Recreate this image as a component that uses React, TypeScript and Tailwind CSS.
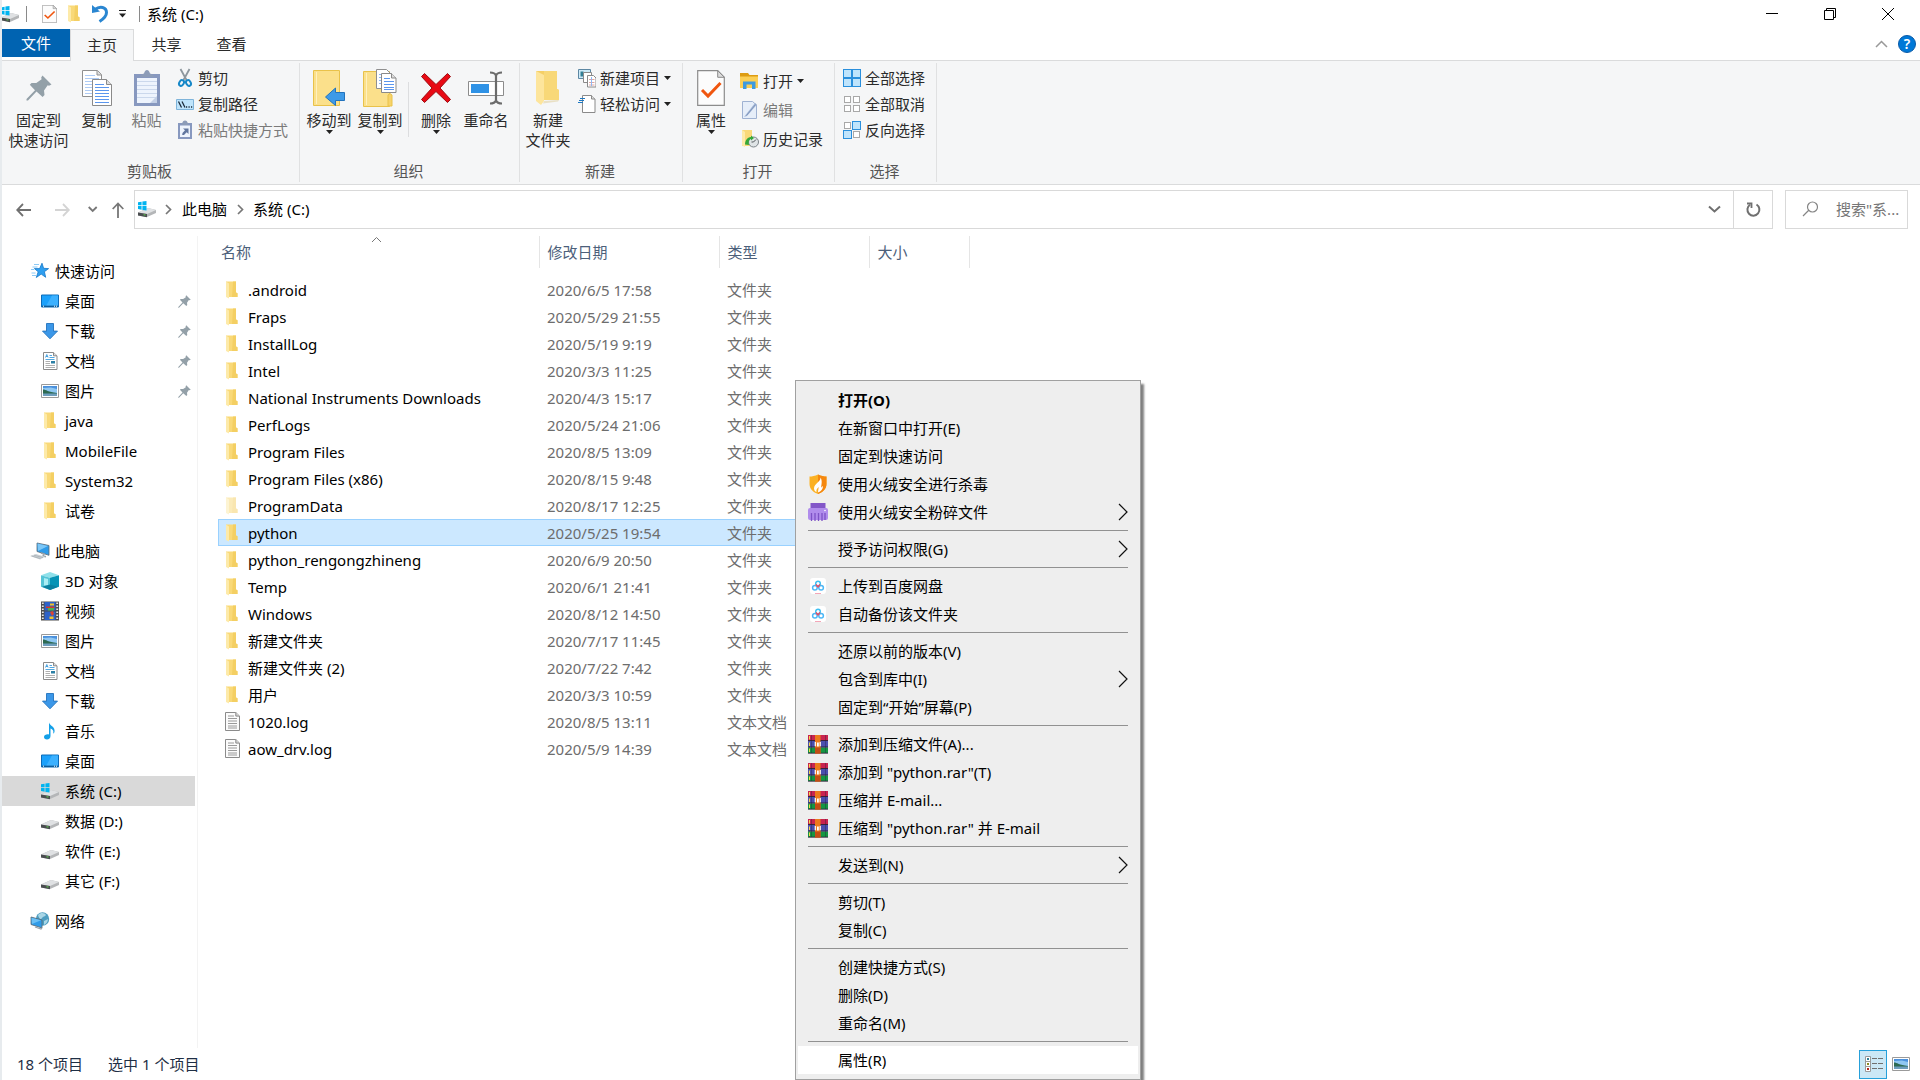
import type { ReactNode } from "react";

/* ---------- icons ---------- */

function DriveIcon({ system = false }: { system?: boolean }) {
  return (
    <svg width="20" height="18" viewBox="0 0 20 18" className="shrink-0">
      <path d="M1 12.5L11 8l8 2v3l-9 4-9-1.6z" fill="#b4b6b8" />
      <path d="M1 12.5L11 8l8 2-9 4z" fill="#dfe1e3" />
      <path d="M1 12.5l9 1.5v3.2L1 15.4z" fill="#4a4d50" />
      <path d="M6.5 14.3l2 .3v1l-2-.3z" fill="#5fd34a" />
      {system && (
        <path d="M1 2.3l3.6-.6v3.6H1zM5.4 1.5L9.5.9v4.4H5.4zM1 6.1h3.6v3.6L1 9.1zM5.4 6.1h4.1v4.4l-4.1-.6z" fill="#00b4f0" />
      )}
    </svg>
  );
}

function FolderIcon({ faded = false }: { faded?: boolean }) {
  return (
    <svg width="14" height="18" viewBox="0 0 14 18" className={faded ? "shrink-0 opacity-50" : "shrink-0"}>
      <path d="M1 .5h10v11l1.5.7v3.8H1z" fill="#f9d978" />
      <path d="M8 .5h3v11l1.5.7v3.8H7z" fill="#f4cf63" />
      <path d="M1 .5l3 2v15L1 16z" fill="#fdeaa9" />
    </svg>
  );
}

function TextFileIcon() {
  return (
    <svg width="15" height="19" viewBox="0 0 15 19" className="shrink-0">
      <path d="M.5.5h10.3l3.7 3.6v14.4H.5z" fill="#fbfbfb" stroke="#8b8b8b" />
      <path d="M10.8.5v3.6h3.7" fill="#d5d5d5" stroke="#8b8b8b" />
      <path d="M3 4h6M3 6.5h9M3 9h9M3 11.5h9M3 14h9M3 16h9" stroke="#9a9a9a" />
    </svg>
  );
}

function StarIcon() {
  return (
    <svg width="18" height="18" viewBox="0 0 18 18" className="shrink-0">
      <path d="M11 1.2l1.6 5.1 5 .3-4.2 3.1 1.3 5.6-4.5-3.2-4.9 3.4 1.9-5.7-3.8-3.2h5.2z" fill="#2e9ff0" stroke="#1577c9" strokeWidth=".8" />
      <path d="M3 2.5h5M1.5 5h5M0 7.5h3M1 13.5h4M.5 11h4" stroke="#7fc4f5" strokeWidth=".9" />
    </svg>
  );
}

function DesktopIcon() {
  return (
    <svg width="18" height="18" viewBox="0 0 18 18" className="shrink-0">
      <path d="M.5 3h17v12H.5z" fill="#1ba1fb" stroke="#0d6cb8" />
      <path d="M11 3.5h6V14H5z" fill="#3cb1ff" />
      <path d="M1 14.2h16" stroke="#0a4a80" />
      <path d="M2 14.2h1M13 14.2h1M15 14.2h1" stroke="#fff" />
    </svg>
  );
}

function DownloadIcon() {
  return (
    <svg width="18" height="18" viewBox="0 0 18 18" className="shrink-0">
      <path d="M5.5 1.5h7v7.6h4L9 16.8 1.5 9.1h4z" fill="#3b97e8" stroke="#2273bd" strokeWidth=".9" />
    </svg>
  );
}

function DocumentIcon() {
  return (
    <svg width="18" height="18" viewBox="0 0 18 18" className="shrink-0">
      <path d="M2.5.5h10l3.500 3.300v13.700H2.500z" fill="#fff" stroke="#8a8a8a" />
      <path d="M12.500.500v3.300H16" fill="#ddd" stroke="#8a8a8a" />
      <path d="M4.500 5.500l1.300-3 1.300 3M5 4.500h1.700" stroke="#2491d9" strokeWidth=".8" fill="none" />
      <path d="M8.500 3.500h2.500M8.500 5.500h5M4.500 7.500h9" stroke="#2491d9" strokeWidth=".8" />
      <path d="M4.500 9.500h4.500M4.500 11.500h4.500M4.500 13.500h9.500M4.500 15.500h9.500" stroke="#9b9b9b" strokeWidth=".8" />
      <path d="M10 9h4v2.500h-4z" fill="#2c7fa5" />
    </svg>
  );
}

function PictureIcon() {
  return (
    <svg width="18" height="18" viewBox="0 0 18 18" className="shrink-0">
      <path d="M.5 2.500h17v13H.5z" fill="#fff" stroke="#9a9a9a" />
      <path d="M2 4h14v10H2z" fill="#8fc7f2" />
      <path d="M2 4h14v3l-6-1.500L2 6z" fill="#4a90dc" />
      <path d="M2 7.500c3 0 5 2.500 14 3.500V12H2z" fill="#2d6a52" />
      <path d="M2 11.500h14V14H2z" fill="#6d9dbd" />
    </svg>
  );
}

function PinIcon({ size }: { size: number }) {
  return (
    <svg width={size} height={size} viewBox="0 0 26 26" className="shrink-0">
      <path d="M16.500 .5L25.500 9.500 23 10.700 21.700 10.200 18 15.500 18.500 20 16.600 22 10.500 16.600 2 25.500.500 25.500.500 24 9 15.200 3.800 9.700 5.500 8 10.300 8 15.600 4.300 15.200 2.500z" fill="#93a0a8" />
    </svg>
  );
}

function ComputerIcon() {
  return (
    <svg width="20" height="18" viewBox="0 0 20 18" className="shrink-0">
      <path d="M7 1l12 2.500v9.800L7 9.500z" fill="#2f9be8" stroke="#5c6a75" strokeWidth=".8" />
      <path d="M7.500 1.600L18 4 8 9z" fill="#7cc7f7" />
      <path d="M11 11l3 1-1 2 3 .8" fill="none" stroke="#9aa3aa" strokeWidth="1.500" />
      <path d="M0 14l6-2 9 2.800-5 2.700z" fill="#ccd2d6" />
      <path d="M1.500 14l9 2.600M4 13.200l9 2.500" stroke="#9aa3aa" strokeWidth=".6" />
    </svg>
  );
}

function CubeIcon() {
  return (
    <svg width="18" height="18" viewBox="0 0 18 18" className="shrink-0">
      <path d="M9 0l9 3.300L9 5.800 0 3.300z" fill="#8fe0ea" />
      <path d="M0 3.300l9 2.500V18l-9-3.300z" fill="#54c4d6" />
      <path d="M18 3.300L9 5.800V18l9-3.300z" fill="#0793b5" />
      <path d="M3 6l4 1v6l-4 .5z" fill="#a9edf4" />
      <path d="M9 12.500l8 2.300L9 18l-8-3.200z" fill="#0b7f9f" />
    </svg>
  );
}

function VideoIcon() {
  return (
    <svg width="18" height="20" viewBox="0 0 18 20" className="shrink-0">
      <path d="M0 .5h18v19H0z" fill="#4b4b4b" />
      <path d="M1.800 1.500v17M16.200 1.500v17" stroke="#e8e8e8" strokeWidth="1.800" strokeDasharray="1.600 1.400" />
      <path d="M3.500 1h11v8.500h-11zM3.500 10.500h11V19h-11z" fill="#2d62c8" />
      <path d="M9 2.500h4v2H9z" fill="#f2c22b" />
      <path d="M5 5.500h8.500V7H5z" fill="#d7372b" />
      <path d="M7 7h6v2.500H7z" fill="#4fb04b" />
      <path d="M9 11l3-1 1 3-2 2z" fill="#e0452f" />
      <path d="M8.500 15.500h4V18h-4z" fill="#f2c22b" />
    </svg>
  );
}

function MusicIcon() {
  return (
    <svg width="18" height="18" viewBox="0 0 18 18" className="shrink-0">
      <path d="M8 .5c1 3.500 6.500 4.200 5.500 9.500-.4 1-.9 1.500-1.300 1.500C13 8 11 7 9.500 6.500V14c0 2-1.500 3.500-3.500 3.500S3 16.500 3 15c0-2 2.500-3 5-2.500z" fill="#14a0e8" />
    </svg>
  );
}

function NetworkIcon() {
  return (
    <svg width="20" height="18" viewBox="0 0 20 18" className="shrink-0">
      <circle cx="12.500" cy="7" r="6.700" fill="#4d9dc0" />
      <path d="M8 3c3-3 7-2 8 0-1 2-3 1-4 3s-3 1-4-3zM14 9l4-2c0 3-2 5-4 6z" fill="#a9d6e6" />
      <path d="M1 5l11 3v8L1 12.500z" fill="#2f9be8" stroke="#5a6770" strokeWidth=".8" />
      <path d="M1.500 5.700L11 8.300 2 12z" fill="#6bc0f5" />
      <path d="M5 15l6 2 1-1" stroke="#9aa3aa" fill="none" strokeWidth="1.300" />
    </svg>
  );
}

function CheckDocIcon({ width, height }: { width: number; height: number }) {
  return (
    <svg width={width} height={height} viewBox="0 0 28 36" preserveAspectRatio="none">
      <path d="M.700 .700h20l6.600 6.600v28H.700z" fill="#fcfcfc" stroke="#8c8c8c" strokeWidth="1.200" />
      <path d="M20.700 .700v6.600h6.600z" fill="#ddd" stroke="#8c8c8c" />
      <path d="M5 20l6 6 12.500-13" fill="none" stroke="#f0560f" strokeWidth="3" />
    </svg>
  );
}

function CopyIcon() {
  return (
    <svg width="30" height="36" viewBox="0 0 30 36">
      <path d="M.500 .500h15l4 4v22H.500z" fill="#fff" stroke="#909090" />
      <path d="M15 .500v4.500h4.500" fill="#ddd" stroke="#909090" />
      <path d="M3 5.500h10M3 8.500h14M3 11.500h14M3 14.500h14M3 17.500h14M3 20.500h8M3 23.500h8" stroke="#aecbf5" />
      <path d="M10.500 9.500h14l5 5v21h-19z" fill="#fff" stroke="#8a8a8a" />
      <path d="M24.500 9.500v5h5" fill="#ddd" stroke="#8a8a8a" />
      <path d="M13 14.500h9M13 17.500h14M13 20.500h14M13 23.500h14M13 26.500h14M13 29.500h14M13 32.500h14" stroke="#5a96ee" />
    </svg>
  );
}

function PasteIcon() {
  return (
    <svg width="26" height="36" viewBox="0 0 26 36">
      <path d="M0 4h26v32H0z" fill="#8798bf" />
      <path d="M3 8h20v25H3z" fill="#eef4fd" />
      <path d="M3 11.500h20M3 15.500h20M3 19.500h20M3 23.500h20M3 27.500h20" stroke="#cbd8ec" />
      <path d="M6 7c0-2 2-3 4-3.500C10.500 1 12 0 13 0s2.500 1 3 3.500C18 4 20 5 20 7z" fill="#8c9cb8" />
      <path d="M16 33l7-7v7z" fill="#c3d0e6" />
    </svg>
  );
}

function ScissorsIcon() {
  return (
    <svg width="18" height="20" viewBox="0 0 18 20" className="shrink-0">
      <path d="M4.500 1l6 11M13.500 1l-6 11" stroke="#8d979e" strokeWidth="1.800" fill="none" />
      <ellipse cx="5.500" cy="15" rx="2.200" ry="3" transform="rotate(30 5.500 15)" fill="none" stroke="#1788c8" strokeWidth="2" />
      <ellipse cx="12.500" cy="15" rx="2.200" ry="3" transform="rotate(-30 12.500 15)" fill="none" stroke="#1788c8" strokeWidth="2" />
    </svg>
  );
}

function PathIcon() {
  return (
    <svg width="18" height="20" viewBox="0 0 18 20" className="shrink-0">
      <path d="M.5 5.500h17v10H.5z" fill="#bfe4fb" stroke="#7fb4da" />
      <path d="M2.500 7.500l3 6M6 7.500l3 6" stroke="#1b2a3a" strokeWidth="1.300" />
      <path d="M10 13h1.200M12.500 13h1.200M15 13h1.200" stroke="#1b2a3a" strokeWidth="1.300" />
    </svg>
  );
}

function ShortcutIcon() {
  return (
    <svg width="18" height="20" viewBox="0 0 18 20" className="shrink-0">
      <path d="M2 3h14v16H2z" fill="#8798bf" />
      <path d="M4 5.500h10v11.500H4z" fill="#eef4fd" />
      <path d="M6 4c.5-2.500 1.500-3.500 3-3.500s2.500 1 3 3.500v1H6z" fill="#8c9cb8" />
      <path d="M7 8.500h5.500V14l-1.800-1.800L8 15H6.200l.3-2 2.500-2.700z" fill="#61769f" />
    </svg>
  );
}

function MoveToIcon() {
  return (
    <svg width="32" height="36" viewBox="0 0 32 36">
      <path d="M.500 .500h26v35H.500z" fill="#fbe08b" stroke="#e9c24a" />
      <path d="M3.500 2v32" stroke="#fff0bd" />
      <path d="M31.500 22.500v8h-9v5L12.500 27l10-9v4.500z" fill="#3d9ae8" stroke="#2273bd" />
    </svg>
  );
}

function CopyToIcon() {
  return (
    <svg width="34" height="38" viewBox="0 0 34 38">
      <path d="M.500 2.500h26v35H.500z" fill="#fbe08b" stroke="#e9c24a" />
      <path d="M3.500 4v32" stroke="#fff0bd" />
      <path d="M25 37V26l2-1.500 2 1.500v11z" fill="#f7d36a" stroke="#e9c24a" />
      <path d="M13.500 .500h10l4 4v15h-14z" fill="#fff" stroke="#909090" />
      <path d="M16 5.500h6M16 8.500h6M16 11.500h4M16 14.500h4" stroke="#8eb7f3" />
      <path d="M18.500 4.500h10l4.500 4.500v14.500H18.500z" fill="#fff" stroke="#8a8a8a" />
      <path d="M28.500 4.500v4.500h4.500" fill="#ddd" stroke="#8a8a8a" />
      <path d="M21 9.500h6M21 12.500h10M21 15.500h10M21 18.500h10M21 20.500h10" stroke="#5a96ee" />
    </svg>
  );
}

function DeleteIcon() {
  return (
    <svg width="32" height="32" viewBox="0 0 32 32">
      <path d="M4.500 1.500l11.500 11 11.500-11 3 3L20 16l10.500 11.500-3 3-11.500-11-11.500 11-3-3L12 16 1.500 4.500z" fill="#e80a14" stroke="#9d0d12" strokeWidth="1" />
    </svg>
  );
}

function RenameIcon() {
  return (
    <svg width="36" height="34" viewBox="0 0 36 34">
      <path d="M.500 10.500h35v14H.500z" fill="#fff" stroke="#8c8c8c" />
      <path d="M3 13h18v9H3z" fill="#2f92e6" />
      <path d="M22 1.500c3 0 5 .5 6 3 1-2.500 3-3 6-3M22 32.500c3 0 5-.5 6-3 1 2.500 3 3 6 3M28 4v26" fill="none" stroke="#6b6b6b" strokeWidth="2.200" />
    </svg>
  );
}

function NewFolderIcon() {
  return (
    <svg width="26" height="36" viewBox="0 0 26 36">
      <path d="M1 1h21v18l2 1v10H7z" fill="#f5cf66" />
      <path d="M9 1h13v18l2 1v10H9z" fill="#f8d878" />
      <path d="M1 1l8 4v26l-3 4-5-4z" fill="#fde59c" />
      <path d="M9 31l15-1-1 1.500-15 2z" fill="#e9e0c5" />
    </svg>
  );
}

function NewItemIcon() {
  return (
    <svg width="18" height="20" viewBox="0 0 18 20" className="shrink-0">
      <path d="M.5 1.500h12v9H.5z" fill="#cdeaf8" stroke="#5c87a3" />
      <path d="M2.500 3.500h3v5h-3z" fill="#337f95" />
      <path d="M5.500 4.500h8v10h-8z" fill="#fff" stroke="#8a8a8a" />
      <path d="M9.500 7.500h6l2.500 2.500v9H9.500z" fill="#fff" stroke="#8a8a8a" />
      <path d="M11 11.500h5.500M11 14.500h5.500M11 17h5.500" stroke="#e0a5a0" />
      <path d="M13.500 9v9" stroke="#8eb7f3" />
    </svg>
  );
}

function EasyAccessIcon() {
  return (
    <svg width="18" height="20" viewBox="0 0 18 20" className="shrink-0">
      <path d="M4.500 1.500h9l3.500 3.500v13.500H4.500z" fill="#fff" stroke="#8a8a8a" />
      <path d="M13.500 1.500v3.500H17" fill="#ddd" stroke="#8a8a8a" />
      <path d="M2 4.500h5M1 6.500h5M0 8.500h5" stroke="#1f78c1" strokeWidth="1.200" />
    </svg>
  );
}

function OpenFolderIcon() {
  return (
    <svg width="19" height="18" viewBox="0 0 19 18" className="shrink-0">
      <path d="M0 1h8l1.500 2H18v13H0z" fill="#dd9c12" />
      <path d="M0 4.500h18V16H0z" fill="#fbcf55" />
      <path d="M3 9.500h12.500V17h-3.500v-4.500H6.500V17H3z" fill="#3d9ae0" />
    </svg>
  );
}

function EditIcon() {
  return (
    <svg width="19" height="20" viewBox="0 0 19 20" className="shrink-0">
      <path d="M2.500 1.500h10l4 3.500v13.500h-14z" fill="#e6eef9" stroke="#9fb2d2" />
      <path d="M4 17L15 3l2 1.500L7 16z" fill="#a4b7d5" />
      <path d="M6.500 15.500L15.500 4.500" stroke="#7e95bd" />
    </svg>
  );
}

function HistoryIcon() {
  return (
    <svg width="19" height="18" viewBox="0 0 19 18" className="shrink-0">
      <path d="M2 0h10v16H2z" fill="#f9d978" />
      <path d="M2 0l3 2v15l-3-1.500z" fill="#fdeaa9" />
      <circle cx="13.500" cy="12" r="5" fill="#dfe4e6" stroke="#7b8388" />
      <path d="M13.500 12l2.500-2.500M13.500 12h-2" stroke="#4d5357" />
      <path d="M5 14.500c0-4 2-7 6-7.500V5.500l3 2.500-3 2.500V9c-2 .5-3 2.500-2 6z" fill="#35a83a" />
    </svg>
  );
}

const CELLS = [[0, 0], [9, 0], [0, 9], [9, 9]];

function SelectIcon({ on }: { on: boolean[] }) {
  return (
    <svg width="18" height="18" viewBox="0 0 18 18" className="shrink-0">
      {CELLS.map(([x, y], i) =>
        on[i] ? (
          <rect key={i} x={x + 0.5} y={y + 0.5} width="8" height="8" fill="#bfe4fc" stroke="#2a8fdc" />
        ) : (
          <rect key={i} x={x + 1.5} y={y + 1.5} width="6" height="6" fill="#fff" stroke="#a8a8a8" />
        )
      )}
    </svg>
  );
}

function ShieldIcon() {
  return (
    <svg width="20" height="20" viewBox="0 0 20 20">
      <path d="M10 .5c3 1.500 6 2 8.500 2V10c0 5-4 8.500-8.500 10C5.500 18.500 1.500 15 1.500 10V2.500C4 2.500 7 2 10 .5z" fill="#fbb124" />
      <path d="M10 .5c3 1.500 6 2 8.500 2V10c0 5-4 8.500-8.500 10z" fill="#f5870f" />
      <path d="M12.500 3.500c.5 4-6.500 6-6.500 11 0 1.500 1 3 2.500 3.500-.5-2 .5-3.500 2-5 0 2-.5 3.500-.5 5.500 3-1 5-3.500 5-6.500-1 .5-1.500 1-2 2 .5-4 1.500-7-.5-10.500z" fill="#fff" />
    </svg>
  );
}

function ShredIcon() {
  return (
    <svg width="20" height="18" viewBox="0 0 20 18">
      <path d="M2.500 0h15v7h-15z" fill="#8256c8" />
      <rect y="5" width="20" height="12" rx="2" fill="#b08cec" />
      <path d="M3.500 10v8M7 10v8M10.500 10v8M14 10v8M17 10v7" stroke="#7d52c6" strokeWidth="1.300" />
      <circle cx="17" cy="7.500" r=".8" fill="#fff" />
    </svg>
  );
}

function CloudIcon() {
  return (
    <svg width="16" height="16" viewBox="0 0 16 16">
      <rect width="16" height="16" rx="3" fill="#fff" />
      <circle cx="8" cy="5.500" r="2.300" fill="none" stroke="#3fc0f2" strokeWidth="1.500" />
      <circle cx="4.900" cy="9.800" r="2.300" fill="none" stroke="#4db8f7" strokeWidth="1.500" />
      <circle cx="11.100" cy="9.800" r="2.300" fill="none" stroke="#4db8f7" strokeWidth="1.500" />
      <path d="M6 6.500L8 9l2-2.500" fill="none" stroke="#ee4b62" strokeWidth="1.400" />
      <path d="M5 15.500h6" stroke="#f3a6b8" />
    </svg>
  );
}

function RarIcon() {
  return (
    <svg width="20" height="19" viewBox="0 0 20 19">
      <path d="M0 0h20v6H0z" fill="#c9244f" />
      <path d="M0 6h20v6.500H0z" fill="#4a4fae" />
      <path d="M0 12.500h20V18H0z" fill="#149642" />
      <path d="M0 5.500h20M0 12h20M0 18.200h20" stroke="#2b2238" strokeWidth=".9" />
      <path d="M3.500 0v18M17.500 0v18" stroke="#1c1c3c" strokeOpacity=".35" />
      <path d="M1.500 1v3.500M1.500 7.500V11M1.500 13.500V17" stroke="#f2d64e" />
      <path d="M7 0h5.500v18.500H7z" fill="#ec7a1d" />
      <path d="M7 12.500h5.500v6H7z" fill="#c14d16" />
      <path d="M7.300 7v4.200M12.200 7v4.200" stroke="#fff" strokeWidth="1.200" />
      <path d="M9 7.500h1.800v4H9z" fill="#fff" />
    </svg>
  );
}

function Chevron({ d, width, height, color = "#777", stroke = 1.5 }: { d: string; width: number; height: number; color?: string; stroke?: number }) {
  return (
    <svg width={width} height={height} viewBox={`0 0 ${width} ${height}`} className="shrink-0">
      <path d={d} fill="none" stroke={color} strokeWidth={stroke} />
    </svg>
  );
}

function Caret() {
  return (
    <svg width="7" height="4" viewBox="0 0 7 4" className="shrink-0">
      <path d="M0 0h7L3.500 4z" fill="#222" />
    </svg>
  );
}

/* ---------- ribbon ---------- */

type BigProps = { icon: ReactNode; lines: string[]; width: string; caret?: boolean; disabled?: boolean };

function BigButton({ icon, lines, width, caret, disabled }: BigProps) {
  return (
    <button disabled={disabled} className={`flex shrink-0 flex-col items-center pt-[7px] leading-5 ${width} ${disabled ? "text-[#7a7a7a]" : ""}`}>
      <span className="mb-1 flex h-9 items-center">{icon}</span>
      {lines.map((line) => (
        <span key={line} className="whitespace-nowrap">{line}</span>
      ))}
      {caret && <Caret />}
    </button>
  );
}

type SmallProps = { icon: ReactNode; label: string; caret?: boolean; disabled?: boolean; tall?: boolean };

function SmallButton({ icon, label, caret, disabled, tall }: SmallProps) {
  return (
    <button disabled={disabled} className={`flex items-center gap-1 whitespace-nowrap ${tall ? "h-[29px]" : "h-[26px]"} ${disabled ? "text-[#7a7a7a]" : ""}`}>
      {icon}
      <span>{label}</span>
      {caret && <Caret />}
    </button>
  );
}

function Group({ title, width, children }: { title: string; width: string; children: ReactNode }) {
  return (
    <section className={`flex shrink-0 flex-col border-r border-[#e0e1e2] ${width}`}>
      <div className="flex flex-1">{children}</div>
      <h2 className="pr-0.5 pb-px text-center leading-5 text-[#555]">{title}</h2>
    </section>
  );
}

function Ribbon() {
  return (
    <div className="flex h-[125px] overflow-hidden border-y border-[#dadbdc] bg-[#f5f6f7] py-0.5 text-[#2b2b2b]">
      <Group title="剪贴板" width="w-[298px]">
        <BigButton icon={<PinIcon size={26} />} lines={["固定到", "快速访问"]} width="w-[73px]" />
        <BigButton icon={<CopyIcon />} lines={["复制"]} width="w-[43px]" />
        <BigButton icon={<PasteIcon />} lines={["粘贴"]} width="w-[57px]" disabled />
        <div className="flex flex-col pt-0.5 pl-px">
          <SmallButton icon={<ScissorsIcon />} label="剪切" />
          <SmallButton icon={<PathIcon />} label="复制路径" />
          <SmallButton icon={<ShortcutIcon />} label="粘贴快捷方式" disabled />
        </div>
      </Group>
      <Group title="组织" width="w-[220px]">
        <BigButton icon={<MoveToIcon />} lines={["移动到"]} width="w-[58px]" caret />
        <BigButton icon={<CopyToIcon />} lines={["复制到"]} width="w-[44px]" caret />
        <div className="mt-[19px] ml-[6px] h-[55px] w-px bg-[#dcdddf]" />
        <BigButton icon={<DeleteIcon />} lines={["删除"]} width="w-[54px]" caret />
        <BigButton icon={<RenameIcon />} lines={["重命名"]} width="w-[46px]" />
      </Group>
      <Group title="新建" width="w-[163px]">
        <BigButton icon={<NewFolderIcon />} lines={["新建", "文件夹"]} width="w-[56px]" />
        <div className="flex flex-col pt-0.5 pl-[2px]">
          <SmallButton icon={<NewItemIcon />} label="新建项目" caret />
          <SmallButton icon={<EasyAccessIcon />} label="轻松访问" caret />
        </div>
      </Group>
      <Group title="打开" width="w-[152px]">
        <BigButton icon={<CheckDocIcon width={28} height={36} />} lines={["属性"]} width="w-[56px]" caret />
        <div className="flex flex-col pt-[3px] pl-px">
          <SmallButton icon={<OpenFolderIcon />} label="打开" caret tall />
          <SmallButton icon={<EditIcon />} label="编辑" disabled tall />
          <SmallButton icon={<HistoryIcon />} label="历史记录" tall />
        </div>
      </Group>
      <Group title="选择" width="w-[102px]">
        <div className="flex flex-col pt-0.5 pl-2">
          <SmallButton icon={<SelectIcon on={[true, true, true, true]} />} label="全部选择" />
          <SmallButton icon={<SelectIcon on={[false, false, false, false]} />} label="全部取消" />
          <SmallButton icon={<SelectIcon on={[false, true, true, false]} />} label="反向选择" />
        </div>
      </Group>
    </div>
  );
}

/* ---------- title bar and address bar ---------- */

function TitleBar() {
  return (
    <header className="flex h-[29px] items-center overflow-hidden pb-0.5">
      <div className="-ml-0.5 flex items-center">
        <DriveIcon system />
      </div>
      <div className="ml-[6px] h-4 w-px bg-[#8a8a8a]" />
      <button aria-label="属性" className="ml-[15px]"><CheckDocIcon width={15} height={18} /></button>
      <button aria-label="新建文件夹" className="ml-[10px]"><FolderIcon /></button>
      <button aria-label="撤消" className="ml-[11px]">
        <svg width="17" height="19" viewBox="0 0 17 19">
          <path d="M3 5.500C8 1.500 14.500 3 14.500 8.500c0 4-3 6.500-7 9" fill="none" stroke="#2a86d1" strokeWidth="3" />
          <path d="M0 1l8 6.500L0 9z" fill="#2a86d1" />
        </svg>
      </button>
      <button aria-label="自定义快速访问工具栏" className="ml-[10px]">
        <svg width="7" height="8" viewBox="0 0 7 8">
          <path d="M0 .5h7" stroke="#222" />
          <path d="M0 3.500h7L3.500 7.500z" fill="#222" />
        </svg>
      </button>
      <div className="ml-[13px] h-4 w-px bg-[#8a8a8a]" />
      <h1 className="ml-[7px]">系统 (C:)</h1>
      <div className="ml-auto flex items-center gap-[46px] pr-[26px]">
        <button aria-label="最小化"><Chevron d="M0 5.500h12" width={12} height={12} color="#000" stroke={1} /></button>
        <button aria-label="还原"><Chevron d="M.500 2.500h9v9h-9zM2.500 2.500v-2h9v9h-2" width={12} height={12} color="#000" stroke={1} /></button>
        <button aria-label="关闭"><Chevron d="M0 0l12 12M12 0L0 12" width={12} height={12} color="#000" stroke={1} /></button>
      </div>
    </header>
  );
}

function Tabs() {
  return (
    <nav className="relative z-10 -mb-px flex h-8 text-[#2b2b2b]">
      <button className="h-7 w-[68px] bg-[#0063b1] text-white">文件</button>
      <button className="w-16 border border-b-0 border-[#dadbdc] bg-[#f5f6f7] pb-0.5">主页</button>
      <button className="h-[31px] w-[65px] pb-0.5">共享</button>
      <button className="h-[31px] w-[65px] pb-0.5">查看</button>
      <div className="ml-auto flex h-[31px] items-center gap-[10px] pr-1 pb-px">
        <button aria-label="折叠功能区"><Chevron d="M1 7l5.500-5.500L12 7" width={13} height={8} color="#999" stroke={1.5} /></button>
        <button aria-label="帮助" className="h-[18px] w-[18px] rounded-full border border-[#0a5aa8] bg-[#0078d7] text-sm leading-4 font-semibold text-white">?</button>
      </div>
    </nav>
  );
}

function AddressBar() {
  return (
    <div className="flex items-center pt-[5px] pr-[12px]">
      <div className="flex w-[132px] items-center pl-[14px]">
        <button aria-label="后退"><Chevron d="M15 7H1.500M7 1L1.200 7 7 13" width={16} height={14} color="#707070" stroke={1.8} /></button>
        <button aria-label="前进" className="ml-[23px]"><Chevron d="M0 7h13.500M8 1l5.800 6L8 13" width={16} height={14} color="#d4d4d4" stroke={1.8} /></button>
        <button aria-label="最近位置" className="ml-[17px]"><Chevron d="M.700 1l4 4 4-4" width={10} height={7} color="#777" stroke={1.8} /></button>
        <button aria-label="上移" className="ml-[14px]"><Chevron d="M6 16V1.500M.700 7L6 1.500 11.300 7" width={12} height={16} color="#777" stroke={1.8} /></button>
      </div>
      <div className="flex h-[39px] min-w-0 flex-1 items-center border border-[#d9d9d9] pb-px pl-0.5">
        <DriveIcon system />
        <span className="ml-[8px]"><Chevron d="M1 1l4.500 4.500L1 10" width={8} height={11} color="#777" stroke={1.7} /></span>
        <a href="#pc" className="ml-[9px]">此电脑</a>
        <span className="ml-[10px]"><Chevron d="M1 1l4.500 4.500L1 10" width={8} height={11} color="#777" stroke={1.7} /></span>
        <a href="#c" className="ml-[8px]">系统 (C:)</a>
        <button aria-label="展开地址" className="ml-auto pr-[12px]"><Chevron d="M1 1.500l5.500 5L12 1.500" width={13} height={8} color="#6f6f6f" stroke={2} /></button>
        <button aria-label="刷新" className="-mb-px flex h-[37px] w-[39px] items-center justify-center border-l border-[#d9d9d9]">
          <svg width="15" height="16" viewBox="0 0 15 16">
            <path d="M10.500 2.500A6 6 0 1 1 4 2.700" fill="none" stroke="#707070" strokeWidth="2" />
            <path d="M1 1.500h4.500V6" fill="none" stroke="#707070" strokeWidth="1.800" />
          </svg>
        </button>
      </div>
      <label className="ml-3 flex h-[39px] w-[123px] items-center border border-[#d9d9d9] pb-px pl-4">
        <Chevron d="M1 15l5.500-5.500M10.500 1a5 5 0 1 1 0 10 5 5 0 1 1 0-10" width={16} height={16} color="#858585" stroke={1.2} />
        <input type="text" aria-label="搜索" placeholder={'搜索"系...'} className="ml-[18px] w-[70px] outline-none placeholder:text-[#767676]" />
      </label>
    </div>
  );
}

/* ---------- navigation pane ---------- */

type NavEntry = { icon: ReactNode; label: string; pinned?: boolean; active?: boolean };

const NAV: { root: NavEntry; items: NavEntry[] }[] = [
  {
    root: { icon: <StarIcon />, label: "快速访问" },
    items: [
      { icon: <DesktopIcon />, label: "桌面", pinned: true },
      { icon: <DownloadIcon />, label: "下载", pinned: true },
      { icon: <DocumentIcon />, label: "文档", pinned: true },
      { icon: <PictureIcon />, label: "图片", pinned: true },
      { icon: <FolderIcon />, label: "java" },
      { icon: <FolderIcon />, label: "MobileFile" },
      { icon: <FolderIcon />, label: "System32" },
      { icon: <FolderIcon />, label: "试卷" },
    ],
  },
  {
    root: { icon: <ComputerIcon />, label: "此电脑" },
    items: [
      { icon: <CubeIcon />, label: "3D 对象" },
      { icon: <VideoIcon />, label: "视频" },
      { icon: <PictureIcon />, label: "图片" },
      { icon: <DocumentIcon />, label: "文档" },
      { icon: <DownloadIcon />, label: "下载" },
      { icon: <MusicIcon />, label: "音乐" },
      { icon: <DesktopIcon />, label: "桌面" },
      { icon: <DriveIcon system />, label: "系统 (C:)", active: true },
      { icon: <DriveIcon />, label: "数据 (D:)" },
      { icon: <DriveIcon />, label: "软件 (E:)" },
      { icon: <DriveIcon />, label: "其它 (F:)" },
    ],
  },
  { root: { icon: <NetworkIcon />, label: "网络" }, items: [] },
];

function Sidebar() {
  return (
    <aside className="mt-[7px] flex w-[196px] shrink-0 flex-col gap-[10px] border-r border-[#f3f3f3] pt-5">
      {NAV.map(({ root, items }) => (
        <ul key={root.label}>
          <li className="flex h-[30px] items-center gap-[5px] pl-[28px]">
            <span className="flex w-5 justify-center">{root.icon}</span>
            <a href="#nav">{root.label}</a>
          </li>
          {items.map((item) => (
            <li key={item.label} className={`mr-0.5 flex h-[30px] items-center gap-[5px] pr-1 pl-[38px] ${item.active ? "bg-[#d9d9d9]" : ""}`}>
              <span className="flex w-5 justify-center">{item.icon}</span>
              <a href="#nav">{item.label}</a>
              {item.pinned && <span className="ml-auto"><PinIcon size={13} /></span>}
            </li>
          ))}
        </ul>
      ))}
    </aside>
  );
}

/* ---------- file list ---------- */

const FILES: [string, string][] = [
  [".android", "2020/6/5 17:58"],
  ["Fraps", "2020/5/29 21:55"],
  ["InstallLog", "2020/5/19 9:19"],
  ["Intel", "2020/3/3 11:25"],
  ["National Instruments Downloads", "2020/4/3 15:17"],
  ["PerfLogs", "2020/5/24 21:06"],
  ["Program Files", "2020/8/5 13:09"],
  ["Program Files (x86)", "2020/8/15 9:48"],
  ["ProgramData", "2020/8/17 12:25"],
  ["python", "2020/5/25 19:54"],
  ["python_rengongzhineng", "2020/6/9 20:50"],
  ["Temp", "2020/6/1 21:41"],
  ["Windows", "2020/8/12 14:50"],
  ["新建文件夹", "2020/7/17 11:45"],
  ["新建文件夹 (2)", "2020/7/22 7:42"],
  ["用户", "2020/3/3 10:59"],
  ["1020.log", "2020/8/5 13:11"],
  ["aow_drv.log", "2020/5/9 14:39"],
];

function FileList() {
  return (
    <div className="min-w-0 flex-1 pt-[7px] pl-5">
      <table className="w-[751px] table-fixed text-left">
        <thead className="text-[#4c607a]">
          <tr className="h-8">
            <th className="relative w-[321px] border-r border-[#e5e5e5] pl-[3px] font-normal">
              名称
              <span className="absolute top-0 left-[153px]"><Chevron d="M1 6l4.500-4.500L10 6" width={11} height={7} color="#777" stroke={1} /></span>
            </th>
            <th className="w-[180px] border-r border-[#e5e5e5] pl-2 font-normal">修改日期</th>
            <th className="w-[150px] border-r border-[#e5e5e5] pl-2 font-normal">类型</th>
            <th className="w-[100px] border-r border-[#e5e5e5] pl-2 font-normal">大小</th>
          </tr>
        </thead>
        <tbody className="before:block before:h-2">
          {FILES.map(([name, date]) => {
            const isLog = name.endsWith(".log");
            return (
              <tr key={name} className={`h-[27px] ${name === "python" ? "bg-[#cce8ff] outline-1 -outline-offset-1 outline-[#99d1ff]" : ""}`}>
                <td className="pl-[7px]">
                  <div className="flex items-center gap-[7px]">
                    <span className="flex w-4">{isLog ? <TextFileIcon /> : <FolderIcon faded={name === "ProgramData"} />}</span>
                    {name}
                  </div>
                </td>
                <td className="pl-2 text-[#6d6d6d]">{date}</td>
                <td className="pl-2 text-[#6d6d6d]">{isLog ? "文本文档" : "文件夹"}</td>
                <td />
              </tr>
            );
          })}
        </tbody>
      </table>
    </div>
  );
}

/* ---------- context menu ---------- */

type MenuEntry = { label: string; icon?: ReactNode; sub?: boolean; bold?: boolean; hover?: boolean };

const MENU: MenuEntry[][] = [
  [
    { label: "打开(O)", bold: true },
    { label: "在新窗口中打开(E)" },
    { label: "固定到快速访问" },
    { label: "使用火绒安全进行杀毒", icon: <ShieldIcon /> },
    { label: "使用火绒安全粉碎文件", icon: <ShredIcon />, sub: true },
  ],
  [{ label: "授予访问权限(G)", sub: true }],
  [
    { label: "上传到百度网盘", icon: <CloudIcon /> },
    { label: "自动备份该文件夹", icon: <CloudIcon /> },
  ],
  [
    { label: "还原以前的版本(V)" },
    { label: "包含到库中(I)", sub: true },
    { label: "固定到“开始”屏幕(P)" },
  ],
  [
    { label: "添加到压缩文件(A)...", icon: <RarIcon /> },
    { label: '添加到 "python.rar"(T)', icon: <RarIcon /> },
    { label: "压缩并 E-mail...", icon: <RarIcon /> },
    { label: '压缩到 "python.rar" 并 E-mail', icon: <RarIcon /> },
  ],
  [{ label: "发送到(N)", sub: true }],
  [{ label: "剪切(T)" }, { label: "复制(C)" }],
  [{ label: "创建快捷方式(S)" }, { label: "删除(D)" }, { label: "重命名(M)" }],
  [{ label: "属性(R)", hover: true }],
];

function ContextMenu() {
  return (
    <div role="menu" className="absolute top-[380px] left-[793px] z-20 w-[346px] border border-[#a0a0a0] bg-[#eeeeee] px-0.5 py-[5px] shadow-[3px_4px_2px_rgba(0,0,0,0.5)]">
      {MENU.map((section, i) => (
        <div key={i}>
          {i > 0 && <div className="mx-[10px] my-1 h-px bg-[#919191]" />}
          {section.map((item) => (
            <button
              key={item.label}
              role="menuitem"
              className={`flex h-7 w-full items-center pr-[10px] pl-[10px] ${item.bold ? "font-bold" : ""} ${item.hover ? "bg-white" : ""}`}
            >
              <span className="mr-[10px] flex w-5 justify-center">{item.icon}</span>
              {item.label}
              {item.sub && <span className="ml-auto"><Chevron d="M1 1l8 8-8 8" width={10} height={18} color="#111" stroke={1.2} /></span>}
            </button>
          ))}
        </div>
      ))}
    </div>
  );
}

function StatusBar() {
  return (
    <footer className="flex h-8 items-center text-[#1f2f45]">
      <span className="pl-[15px]">18 个项目</span>
      <span className="pl-[25px]">选中 1 个项目</span>
      <div className="ml-auto flex items-center gap-[5px] pr-[10px]">
        <button aria-label="详细信息" className="flex h-[29px] w-7 items-center justify-center border border-[#26a0da] bg-[#cbe8f6] pl-0.5">
          <svg width="18" height="16" viewBox="0 0 18 16">
            <path d="M.500 .500h5v15h-5zM.500 5.500h5M.500 10.500h5" fill="#fff" stroke="#9a9a9a" />
            <path d="M2 2h2v2H2z" fill="#2f7f95" />
            <path d="M2 7h2v2H2z" fill="#8a8a1f" />
            <path d="M2 12h2v2H2z" fill="#b5251c" />
            <path d="M7 2.500h5M13 2.500h5M7 7.500h5M13 7.500h5M7 12.500h5M13 12.500h5" stroke="#707070" />
          </svg>
        </button>
        <button aria-label="大缩略图"><PictureIcon /></button>
      </div>
    </footer>
  );
}

export default function App() {
  return (
    <div className="relative flex min-h-screen flex-col border-l-2 border-[#e7ebee] bg-white font-['Noto_Sans','Noto_Sans_CJK_SC',sans-serif] text-[15px] leading-5 text-black">
      <TitleBar />
      <Tabs />
      <Ribbon />
      <AddressBar />
      <main className="flex flex-1">
        <Sidebar />
        <FileList />
      </main>
      <StatusBar />
      <ContextMenu />
    </div>
  );
}
